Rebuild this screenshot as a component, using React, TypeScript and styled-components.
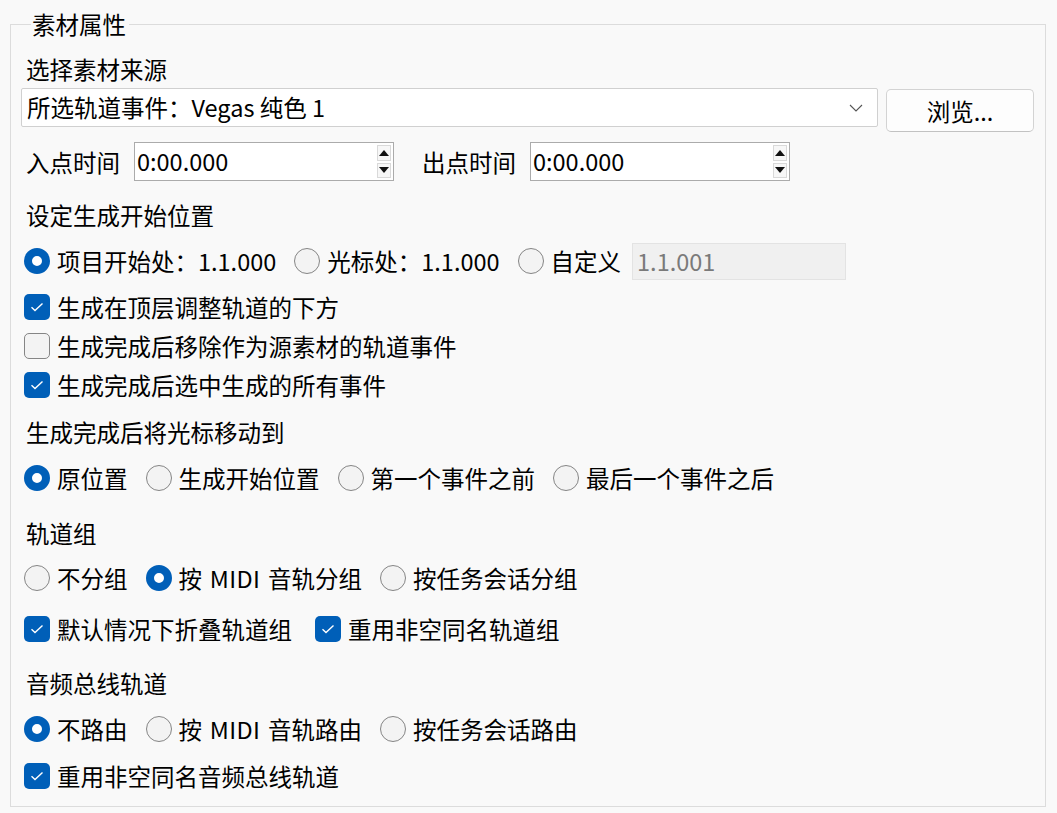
import React from "react";
import styled, { createGlobalStyle } from "styled-components";

const GlobalStyle = createGlobalStyle`
  html, body {
    margin: 0;
    padding: 0;
    background: #f9f9f9;
  }
  body {
    font-family: "Noto Sans CJK SC", "Noto Sans", sans-serif;
    font-size: 23.5px;
    color: #000;
  }
`;

const Page = styled.div`
  width: 1057px;
  height: 813px;
  padding: 9px 0 0 10px;
  box-sizing: border-box;
  background: #f9f9f9;
`;

const Group = styled.fieldset`
  margin: 0;
  padding: 0 0 11px 10px;
  width: 1036px;
  box-sizing: border-box;
  border: 1px solid #dcdcdc;
  display: flex;
  flex-direction: column;
`;

const Legend = styled.legend`
  margin-left: 10px;
  padding: 0 3px 0 1px;
  height: 30px;
  line-height: 30px;
`;

const Label = styled.div<{ $mt: number }>`
  margin-top: ${(p) => p.$mt}px;
  height: 30px;
  line-height: 30px;
  padding-left: 5px;
  white-space: nowrap;
`;

const Row = styled.div<{ $mt: number; $h?: number; $gap?: number }>`
  margin-top: ${(p) => p.$mt}px;
  height: ${(p) => p.$h ?? 38}px;
  display: flex;
  align-items: center;
  gap: ${(p) => p.$gap ?? 0}px;
  white-space: nowrap;
`;

const SourceRow = styled.div`
  margin-top: 4px;
  height: 44px;
  display: flex;
  align-items: flex-start;
  gap: 8px;
`;

const Combo = styled.div`
  width: 857px;
  height: 39px;
  box-sizing: border-box;
  background: #fff;
  border: 1px solid #d0d0d0;
  border-radius: 2px;
  display: flex;
  align-items: center;
  justify-content: space-between;
  padding: 0 14px 0 5px;
  line-height: 37px;
`;

const Button = styled.button`
  margin-top: 1px;
  width: 148px;
  height: 43px;
  box-sizing: border-box;
  background: #fdfdfd;
  border: 1px solid #d3d3d3;
  border-bottom-color: #c2c2c2;
  border-radius: 5px;
  font: inherit;
  color: #000;
  padding: 0;
`;

const FieldLabel = styled.span<{ $ml: number }>`
  margin-left: ${(p) => p.$ml}px;
  margin-right: 14px;
`;

const Spin = styled.div`
  width: 260px;
  height: 39px;
  box-sizing: border-box;
  background: #fff;
  border: 1px solid #ababab;
  display: flex;
  align-items: center;
  padding: 2px;
`;

const SpinValue = styled.span`
  flex: 1;
  line-height: 33px;
`;

const SpinButtons = styled.div`
  width: 14px;
  height: 33px;
  display: flex;
  flex-direction: column;
  gap: 2px;
`;

const SpinButton = styled.div`
  flex: 1;
  border: 1px solid #d9d9d9;
  background: #f7f7f7;
  display: flex;
  align-items: center;
  justify-content: center;
`;

const Option = styled.label`
  display: flex;
  align-items: center;
  gap: 7px;
  height: 38px;
`;

const Latin = styled.span`
  letter-spacing: 0.4px;
  word-spacing: 2px;
`;

const RadioMark = styled.span<{ $on?: boolean }>`
  width: 26px;
  height: 26px;
  box-sizing: border-box;
  border-radius: 50%;
  flex: none;
  margin-left: 3px;
  background: ${(p) => (p.$on ? "#fff" : "#f3f3f3")};
  border: ${(p) => (p.$on ? "8px solid #005fb8" : "1.5px solid #858585")};
`;

const CheckMark = styled.span<{ $on?: boolean }>`
  width: 26px;
  height: 26px;
  box-sizing: border-box;
  border-radius: 5px;
  flex: none;
  margin-left: 3px;
  display: flex;
  align-items: center;
  justify-content: center;
  background: ${(p) => (p.$on ? "#005fb8" : "#f3f3f3")};
  border: ${(p) => (p.$on ? "none" : "1.5px solid #858585")};
`;

const Disabled = styled.div`
  margin-left: -4px;
  width: 214px;
  height: 37px;
  box-sizing: border-box;
  background: #f0f0f0;
  border: 1px solid #e3e3e3;
  color: #7a7a7a;
  padding-left: 4px;
  line-height: 35px;
`;

const Radio = ({ on, children }: { on?: boolean; children: React.ReactNode }) => (
  <Option>
    <RadioMark $on={on} />
    <span>{children}</span>
  </Option>
);

const Check = ({ on, children }: { on?: boolean; children: React.ReactNode }) => (
  <Option>
    <CheckMark $on={on}>
      {on && (
        <svg width="14" height="10" viewBox="0 0 14 10">
          <path d="M1.5 5.2 L5 8.5 L12.5 1.5" fill="none" stroke="#fff" strokeWidth="1.4" />
        </svg>
      )}
    </CheckMark>
    <span>{children}</span>
  </Option>
);

const Arrow = ({ up }: { up?: boolean }) => (
  <svg width="10" height="6" viewBox="0 0 10 6">
    <path d={up ? "M0 6 L5 0 L10 6 Z" : "M0 0 L5 6 L10 0 Z"} fill="#111" />
  </svg>
);

const SpinBox = ({ value }: { value: string }) => (
  <Spin>
    <SpinValue>{value}</SpinValue>
    <SpinButtons>
      <SpinButton>
        <Arrow up />
      </SpinButton>
      <SpinButton>
        <Arrow />
      </SpinButton>
    </SpinButtons>
  </Spin>
);

export default function App() {
  return (
    <Page>
      <GlobalStyle />
      <Group>
        <Legend>素材属性</Legend>
        <Label $mt={15}>选择素材来源</Label>
        <SourceRow>
          <Combo>
            <span>所选轨道事件：Vegas 纯色 1</span>
            <svg width="14" height="8" viewBox="0 0 14 8">
              <path d="M1 1 L7 7 L13 1" fill="none" stroke="#555" strokeWidth="1.1" />
            </svg>
          </Combo>
          <Button>浏览...</Button>
        </SourceRow>
        <Row $mt={10} $h={39}>
          <FieldLabel $ml={5}>入点时间</FieldLabel>
          <SpinBox value="0:00.000" />
          <FieldLabel $ml={28}>出点时间</FieldLabel>
          <SpinBox value="0:00.000" />
        </Row>
        <Label $mt={19}>设定生成开始位置</Label>
        <Row $mt={12} $gap={15}>
          <Radio on>项目开始处：1.1.000</Radio>
          <Radio>光标处：1.1.000</Radio>
          <Radio>自定义</Radio>
          <Disabled>1.1.001</Disabled>
        </Row>
        <Row $mt={7} $h={39}>
          <Check on>生成在顶层调整轨道的下方</Check>
        </Row>
        <Row $mt={0} $h={39}>
          <Check>生成完成后移除作为源素材的轨道事件</Check>
        </Row>
        <Row $mt={0} $h={39}>
          <Check on>生成完成后选中生成的所有事件</Check>
        </Row>
        <Label $mt={13}>生成完成后将光标移动到</Label>
        <Row $mt={12} $gap={15}>
          <Radio on>原位置</Radio>
          <Radio>生成开始位置</Radio>
          <Radio>第一个事件之前</Radio>
          <Radio>最后一个事件之后</Radio>
        </Row>
        <Label $mt={21}>轨道组</Label>
        <Row $mt={11} $gap={15}>
          <Radio>不分组</Radio>
          <Radio on>
            按<Latin> MIDI </Latin>音轨分组
          </Radio>
          <Radio>按任务会话分组</Radio>
        </Row>
        <Row $mt={13} $gap={20}>
          <Check on>默认情况下折叠轨道组</Check>
          <Check on>重用非空同名轨道组</Check>
        </Row>
        <Label $mt={20}>音频总线轨道</Label>
        <Row $mt={12} $gap={15}>
          <Radio on>不路由</Radio>
          <Radio>
            按<Latin> MIDI </Latin>音轨路由
          </Radio>
          <Radio>按任务会话路由</Radio>
        </Row>
        <Row $mt={9}>
          <Check on>重用非空同名音频总线轨道</Check>
        </Row>
      </Group>
    </Page>
  );
}
